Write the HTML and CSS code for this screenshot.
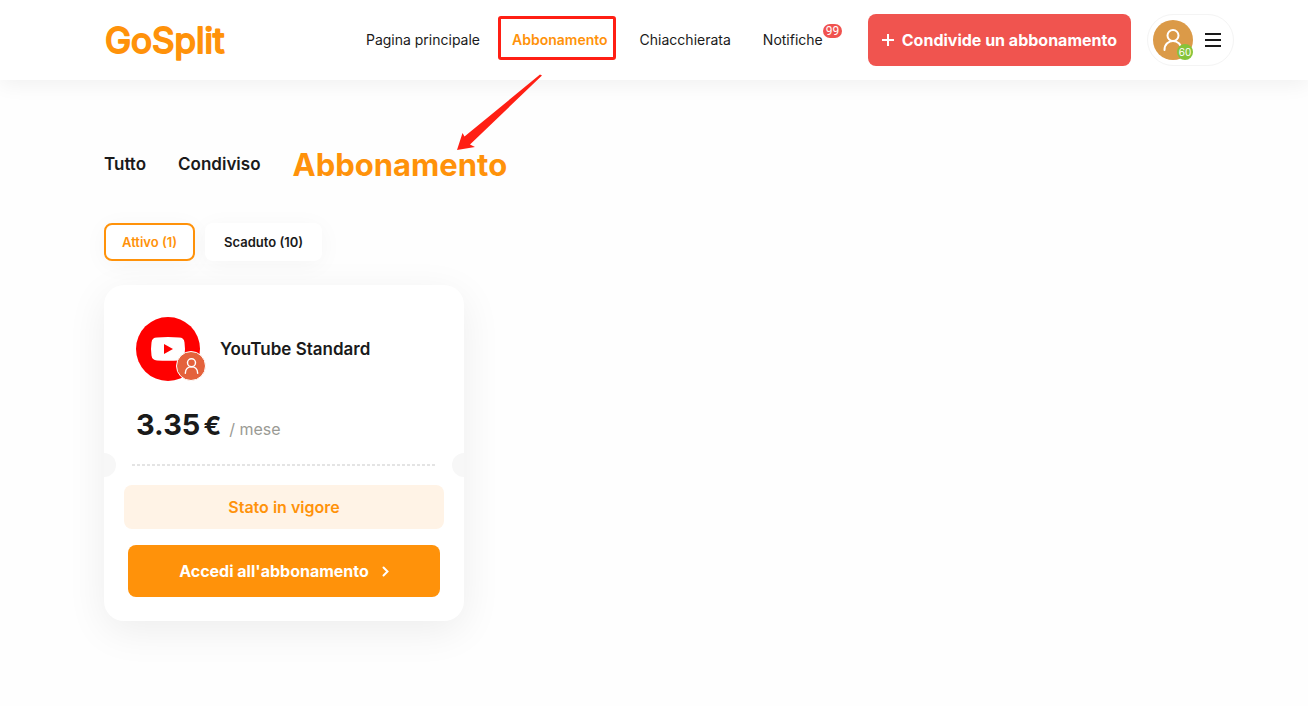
FILE: index.html
```html
<!DOCTYPE html>
<html lang="it">
<head>
    <meta charset="UTF-8">
    <meta name="viewport" content="width=device-width, initial-scale=1.0">
    <title>GoSplit - Abbonamento</title>
    <link rel="stylesheet" href="styles.css">
</head>
<body>

<header class="header">
    <a href="#" class="logo">
        <svg width="140" height="56" viewBox="0 0 140 56">
            <text x="1" y="41">GoSplit</text>
        </svg>
    </a>
    <nav class="nav">
        <a href="#" class="nav-link">Pagina principale</a>
        <a href="#" class="nav-link active">Abbonamento
            <svg class="arrow" width="86" height="77" viewBox="0 0 86 77" aria-hidden="true">
                <path d="M84 0.500L86 1.500L14 70.500L19 73L1 76L6.500 59L8.500 62.500Z" fill="#ff1f14"/>
            </svg>
        </a>
        <a href="#" class="nav-link">Chiacchierata</a>
        <a href="#" class="nav-link">Notifiche<span class="badge">99</span></a>
    </nav>
    <button type="button" class="share-button">
        <svg width="12" height="12" viewBox="0 0 12 12" aria-hidden="true">
            <path d="M6 0V12M0 6H12" stroke="#fff" stroke-width="2"/>
        </svg>
        Condivide un abbonamento
    </button>
    <button type="button" class="user-menu" aria-label="Menu utente">
        <span class="avatar">
            <svg width="20" height="22" viewBox="0 0 20 22" fill="none" stroke="#fff" stroke-width="2" aria-hidden="true">
                <circle cx="10" cy="6.500" r="5.500"/>
                <path d="M1.500 21C1.500 9 18.500 9 18.500 21" stroke-linecap="round"/>
            </svg>
            <span class="score">60</span>
        </span>
        <svg width="16" height="14" viewBox="0 0 16 14" aria-hidden="true">
            <path d="M0 1H16M0 7H16M0 13H16" stroke="#1a1a1a" stroke-width="2"/>
        </svg>
    </button>
</header>

<main class="container">
    <nav class="tabs">
        <a href="#" class="tab">Tutto</a>
        <a href="#" class="tab">Condiviso</a>
        <a href="#" class="tab active">Abbonamento</a>
    </nav>

    <div class="filters">
        <button type="button" class="filter active">Attivo (1)</button>
        <button type="button" class="filter">Scaduto (10)</button>
    </div>

    <article class="card">
        <div class="card-head">
            <div class="service">
                <svg width="64" height="64" viewBox="0 0 64 64" aria-hidden="true">
                    <circle cx="32" cy="32" r="32" fill="#ff0000"/>
                    <path d="M21 20.500Q32 19.500 43 20.500Q48 20.500 48.500 25.500Q49.500 32 48.500 38.500Q48 43 43 43.500Q32 44 21 43.500Q16 43 15.500 38.500Q14.500 32 15.500 25.500Q16 20.500 21 20.500Z" fill="#fff"/>
                    <path d="M28 27L37 32L28 37Z" fill="#ff0000"/>
                </svg>
                <span class="owner">
                    <svg width="15" height="16" viewBox="0 0 20 22" fill="none" stroke="#fff" stroke-width="2" aria-hidden="true">
                        <circle cx="10" cy="6.500" r="5.500"/>
                        <path d="M1.500 21C1.500 9 18.500 9 18.500 21" stroke-linecap="round"/>
                    </svg>
                </span>
            </div>
            <h2 class="card-title">YouTube Standard</h2>
        </div>
        <p class="price">3.35<span class="currency">€</span><span class="period">/ mese</span></p>
        <div class="divider"><span class="dashes"></span></div>
        <p class="status">Stato in vigore</p>
        <button type="button" class="access-button">
            Accedi all'abbonamento
            <svg width="7" height="11" viewBox="0 0 7 11" aria-hidden="true">
                <path d="M1.500 1.500L5.500 5.500L1.500 9.500" fill="none" stroke="#fff" stroke-width="2" stroke-linecap="round"/>
            </svg>
        </button>
    </article>
</main>

</body>
</html>
```
FILE: styles.css
```css
* {
    box-sizing: border-box;
}
body {
    margin: 0;
    font-family: Inter, "Liberation Sans", sans-serif;
    color: #1a1a1a;
    background: #fefefe;
}
a {
    color: inherit;
    text-decoration: none;
}
button {
    border: none;
    font-family: inherit;
    cursor: pointer;
}
.header {
    display: flex;
    align-items: center;
    height: 80px;
    padding: 0 74px 0 104px;
    background: #ffffff;
    box-shadow: 0 4px 20px rgba(0,0,0,0.06);
}
.logo {
    display: flex;
    font-size: 35px;
    font-weight: 400;
}
.logo text {
    fill: #ff920a;
    stroke: #ff920a;
    stroke-width: 2px;
    stroke-linejoin: round;
}
.nav {
    display: flex;
    gap: 32px;
    margin-left: auto;
    margin-right: 45px;
}
.nav-link {
    position: relative;
    font-size: 14px;
    line-height: 20px;
}
.nav-link.active {
    font-weight: 600;
    color: #ff920a;
}
/* red frame round the current page */
.nav-link.active::before {
    content: "";
    position: absolute;
    inset: -14px -8px -10px -14px;
    border: 3px solid #ff1f14;
    border-radius: 3px;
}
.arrow {
    position: absolute;
    top: 44px;
    right: 66px;
    z-index: 1;
}
.badge {
    position: absolute;
    top: -6px;
    left: 100%;
    padding: 0 3px;
    border-radius: 8px;
    background: #f0524f;
    color: #ffffff;
    font: 12px/14px Roboto, sans-serif;
}
.share-button {
    display: flex;
    align-items: center;
    gap: 8px;
    height: 52px;
    padding: 0 14px;
    border-radius: 8px;
    background: #f0544f;
    color: #ffffff;
    font-size: 16px;
    font-weight: 700;
}
.user-menu {
    display: flex;
    align-items: center;
    gap: 12px;
    height: 52px;
    margin-left: 16px;
    padding: 0 12px 0 5px;
    border: 1px solid #f4f4f4;
    border-radius: 26px;
    background: #ffffff;
}
.avatar {
    position: relative;
    display: flex;
    align-items: center;
    justify-content: center;
    width: 40px;
    height: 40px;
    border-radius: 50%;
    background: #db9a48;
}
.score {
    position: absolute;
    right: 0;
    bottom: 0;
    width: 16px;
    border-radius: 50%;
    background: #85c43a;
    color: #ffffff;
    font-size: 10px;
    line-height: 16px;
    text-align: center;
}
.container {
    padding: 64px 104px;
}
.tabs {
    display: flex;
    align-items: center;
    gap: 32px;
    height: 40px;
}
.tab {
    font-size: 17px;
    font-weight: 600;
}
.tab.active {
    font-size: 31px;
    font-weight: 700;
    color: #ff920a;
}
.filters {
    display: flex;
    gap: 10px;
    margin-top: 39px;
}
.filter {
    height: 38px;
    padding: 0 19px;
    border-radius: 8px;
    background: #ffffff;
    box-shadow: 0 4px 24px rgba(0,0,0,0.04);
    color: #1a1a1a;
    font-size: 13px;
    font-weight: 600;
}
.filter.active {
    padding: 0 16px;
    border: 2px solid #ff920a;
    color: #ff920a;
}
.card {
    display: flex;
    flex-direction: column;
    max-width: 360px;
    margin-top: 24px;
    padding: 32px 0 24px;
    border-radius: 20px;
    background: #ffffff;
    box-shadow: 0 10px 40px rgba(0,0,0,0.07);
}
.card-head {
    display: flex;
    align-items: center;
    gap: 20px;
    height: 64px;
    padding: 0 32px;
}
.service {
    position: relative;
    height: 64px;
}
.owner {
    position: absolute;
    right: -6px;
    bottom: 0;
    display: flex;
    align-items: center;
    justify-content: center;
    width: 30px;
    height: 30px;
    border: 1px solid #ffffff;
    border-radius: 50%;
    background: #e4623c;
}
.card-title {
    margin: 0;
    font-size: 17px;
    font-weight: 600;
}
.price {
    margin: 24px 0 0;
    padding: 0 32px;
    font-size: 29px;
    line-height: 40px;
    font-weight: 700;
}
.currency {
    margin-left: 3px;
    font-size: 26px;
    line-height: 1;
}
.period {
    margin-left: 8px;
    color: #9a9a94;
    font-size: 16px;
    font-weight: 400;
    line-height: 1;
}
/* ticket notches on both sides of the dashed line */
.divider {
    display: flex;
    align-items: center;
    justify-content: space-between;
    height: 24px;
    margin-top: 8px;
}
.divider::before,
.divider::after {
    content: "";
    width: 12px;
    height: 24px;
    background: #f7f7f7;
}
.divider::before {
    border-radius: 0 12px 12px 0;
}
.divider::after {
    border-radius: 12px 0 0 12px;
}
.dashes {
    flex: 1;
    height: 2px;
    margin: 0 16px;
    background: repeating-linear-gradient(90deg, #e4e4e4 0 3px, transparent 3px 5px);
}
.status {
    margin: 8px 20px 0;
    border-radius: 8px;
    background: #fff3e6;
    color: #ff920a;
    font-size: 16px;
    font-weight: 600;
    line-height: 44px;
    text-align: center;
}
.access-button {
    display: flex;
    align-items: center;
    justify-content: center;
    gap: 13px;
    height: 52px;
    margin: 16px 24px 0;
    border-radius: 8px;
    background: #ff920a;
    color: #ffffff;
    font-size: 16px;
    font-weight: 700;
}
```
